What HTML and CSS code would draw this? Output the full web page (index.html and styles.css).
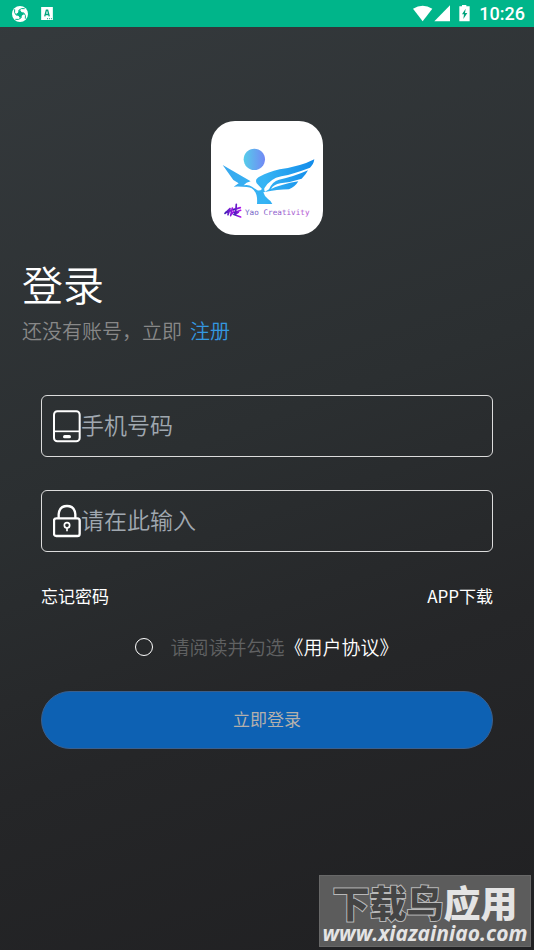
FILE: index.html
```html
<!DOCTYPE html>
<html lang="zh-CN">
<head>
<meta charset="utf-8">
<meta name="viewport" content="width=device-width, initial-scale=1">
<title>登录</title>
<link rel="stylesheet" href="styles.css">
</head>
<body>
<header class="status">
  <div class="status-group">
    <svg class="swirl" viewBox="0 0 48 48" aria-hidden="true">
      <circle cx="24" cy="24" r="24" fill="#fff"/>
      <path d="M20 12Q28 12 28 18L36 20Q36 28 30 28L28 36Q20 36 20 30L12 28Q12 20 18 20Z" fill="#00b58a"/>
      <path d="M20 13Q28 5 38 8M35 20Q43 28 40 38M28 35Q20 43 10 40M13 28Q5 20 8 10" stroke="#00b58a" stroke-width="3" fill="none"/>
    </svg>
    <svg class="badge" viewBox="0 0 36 40" aria-hidden="true">
      <path d="M0 0H36V40H0Z" fill="#fff"/>
      <path d="M11 29L16 10H20L25 29M13 23H23" fill="none" stroke="#00a37c" stroke-width="4"/>
      <path d="M18 36h3m3 0h3m3 0h3" stroke="#00a37c" stroke-width="3"/>
    </svg>
  </div>
  <div class="status-group status-right">
    <svg class="signals" viewBox="0 0 174 54" aria-hidden="true">
      <path d="M0 11Q29-7 58 11L29 49Z" fill="#fff"/>
      <path d="M64 49L111 1V49Z" fill="#fff"/>
      <path d="M139 4H147V0H160V4H170V49H139Z" fill="#fff"/>
      <path d="M158 11L147 28H153L151 42L163 24H156Z" fill="#00a37c"/>
    </svg>
    <time class="clock">10:26</time>
  </div>
</header>

<main class="page">
  <svg class="logo" viewBox="0 0 336 342" role="img" aria-label="Yao Creativity">
    <defs>
      <linearGradient id="sun"><stop offset="0" stop-color="#55cdea"/><stop offset="1" stop-color="#7288f5"/></linearGradient>
      <linearGradient id="bird"><stop offset="0" stop-color="#38a8ee"/><stop offset=".45" stop-color="#36b4f4"/><stop offset="1" stop-color="#128bea"/></linearGradient>
      <linearGradient id="word"><stop offset="0" stop-color="#6a62c4"/><stop offset="1" stop-color="#b653d2"/></linearGradient>
      <linearGradient id="mark"><stop offset="0" stop-color="#3c20b4"/><stop offset="1" stop-color="#b414ef"/></linearGradient>
    </defs>
    <circle cx="130" cy="115" r="32" fill="url(#sun)"/>
    <path fill="url(#bird)" d="M35 132L119 181Q105 184 98 193Q113 190 123 197L139 208Q148 210 153 204L137 187Q130 174 148 166Q170 154 206 145Q270 136 310 115Q308 130 297 140Q250 158 211 166Q177 173 160 202Q159 209 162 212L174 205Q184 181 204 176Q246 168 291 148Q285 161 272 173Q238 184 208 187Q188 190 180 204Q210 190 262 181Q253 197 234 205Q200 205 157 214Q160 226 171 234Q182 241 184 249H138Q141 213 122 202Q112 196 68 197L83 187L67 177Z"/>
    <g fill="none" stroke="url(#mark)" stroke-linecap="round">
      <path stroke-width="5" d="M57 263L42 277M57 263L51 281M44 274H54M64 261L59 284M57 270L70 265M69 272L62 279"/>
      <path stroke-width="5" d="M76 250L74 274M68 266L88 260M70 275L89 268M82 274L70 281L89 288"/>
    </g>
    <text x="102" y="281" class="logo-word" fill="url(#word)">Yao Creativity</text>
  </svg>

  <h1 class="title">登录</h1>
  <p class="subtitle">还没有账号，立即<a class="register" href="#register">注册</a></p>

  <form class="form">
    <div class="field">
      <label for="phone" aria-label="手机号码">
        <svg class="icon" viewBox="0 0 84 102" aria-hidden="true" fill="none" stroke="#fff">
          <rect x="3" y="7" width="77" height="90" rx="10" stroke-width="6"/>
          <path d="M3 67H80" stroke-width="5"/>
          <path d="M35 83H49" stroke-width="10" stroke-linecap="round"/>
        </svg>
      </label>
      <input id="phone" class="input" type="tel" placeholder="手机号码">
    </div>
    <div class="field">
      <label for="password" aria-label="密码">
        <svg class="icon" viewBox="0 0 84 102" aria-hidden="true" fill="none" stroke="#fff">
          <rect x="3" y="43" width="77" height="53" rx="7" stroke-width="7"/>
          <path d="M17 43V31Q19 6 42 6Q65 6 67 31V43" stroke-width="7"/>
          <circle cx="42" cy="64" r="8" stroke-width="5"/>
          <path d="M42 72V82" stroke-width="5"/>
        </svg>
      </label>
      <input id="password" class="input" type="password" placeholder="请在此输入">
    </div>
    <div class="links">
      <a href="#forgot">忘记密码</a>
      <a href="#app">APP下载</a>
    </div>
    <div class="agree">
      <input id="agree" class="radio" type="radio">
      <label for="agree">请阅读并勾选<a href="#terms">《用户协议》</a></label>
    </div>
    <button class="submit" type="button">立即登录</button>
  </form>
</main>

<aside class="watermark">
  <div class="mark-name"><span class="mark-outline">下载鸟</span>应用</div>
  <div class="mark-url">www.xiazainiao.com</div>
</aside>
</body>
</html>
```
FILE: styles.css
```css
* { box-sizing: border-box; }

body {
  margin: 0;
  min-height: 100vh;
  display: flex;
  flex-direction: column;
  background: linear-gradient(160deg, #353a3d 0%, #2b2f31 45%, #252628 70%, #202022 100%);
  color: #fff;
  font-family: "Noto Sans CJK SC", sans-serif;
  position: relative;
}

a { color: inherit; text-decoration: none; }
svg { display: block; flex: none; }

.status {
  height: 27px;
  padding: 0 9px 0 12px;
  display: flex;
  align-items: center;
  justify-content: space-between;
  background: #00b58a;
}
.status-group { display: flex; align-items: center; gap: 13px; }
.status-right { gap: 8px; }
.swirl { width: 16px; height: 16px; }
.badge { width: 12px; height: 13px; }
.signals { width: 58px; height: 18px; }
.clock { font: 500 18px/27px Roboto, sans-serif; }

.page {
  display: flex;
  flex-direction: column;
  padding: 94px 22px 0;
}

.logo {
  width: 112px;
  height: 114px;
  align-self: center;
  background: #fff;
  border-radius: 24px;
}
.logo-word { font: 23px "DejaVu Sans Mono", monospace; }

.title {
  margin: 18px 0 0;
  font-size: 41px;
  line-height: 60px;
  font-weight: 350;
}
.subtitle {
  margin: 2px 0 0;
  display: flex;
  gap: 8px;
  font-size: 20px;
  line-height: 32px;
  font-weight: 350;
  color: #888;
}
.register { color: #3498e0; }

.form {
  display: flex;
  flex-direction: column;
  padding: 0 19px;
  margin-top: 48px;
}
.field {
  height: 62px;
  margin-bottom: 33px;
  padding-left: 11px;
  display: flex;
  align-items: center;
  border: 1px solid #dcdcdc;
  border-radius: 6px;
}
.icon { width: 28px; height: 34px; }
.input {
  flex: 1;
  min-width: 0;
  padding: 0 0 4px;
  border: 0;
  outline: 0;
  background: none;
  color: #fff;
  font: 350 23px/34px "Noto Sans CJK SC", sans-serif;
}
.input::placeholder { color: #a0a8b0; opacity: 1; }

.links {
  display: flex;
  justify-content: space-between;
  font-size: 17px;
  line-height: 22px;
}
.agree {
  margin-top: 26px;
  display: flex;
  align-items: center;
  justify-content: center;
  gap: 17px;
  font-size: 19px;
  line-height: 28px;
  font-weight: 350;
  color: #606162;
}
.agree a { color: #fff; font-weight: 350; }
.radio {
  appearance: none;
  width: 18px;
  height: 18px;
  margin: 0;
  border: 1px solid #fff;
  border-radius: 50%;
}
.radio:checked { background: #0d61b3; }

.submit {
  height: 58px;
  margin-top: 30px;
  padding: 0 0 2px;
  border: 1px solid #3b5f8c;
  border-radius: 29px;
  background: #0d61b3;
  color: #b4b0ac;
  font: 400 17px/24px "Noto Sans CJK SC", sans-serif;
}

.watermark {
  position: absolute;
  right: 3px;
  bottom: 3px;
  width: 212px;
  height: 72px;
  padding-top: 7px;
  background: #5c5c5c;
  border: 1px solid #686868;
  color: #e4e4e4;
  text-align: center;
  white-space: nowrap;
}
.mark-name {
  font-size: 37px;
  line-height: 38px;
  font-weight: 900;
}
.mark-outline {
  color: #444;
  -webkit-text-stroke: 2px #b8b8b8;
  paint-order: stroke fill;
}
.mark-url {
  font: italic 700 21px/24px "Open Sans", sans-serif;
}
```
